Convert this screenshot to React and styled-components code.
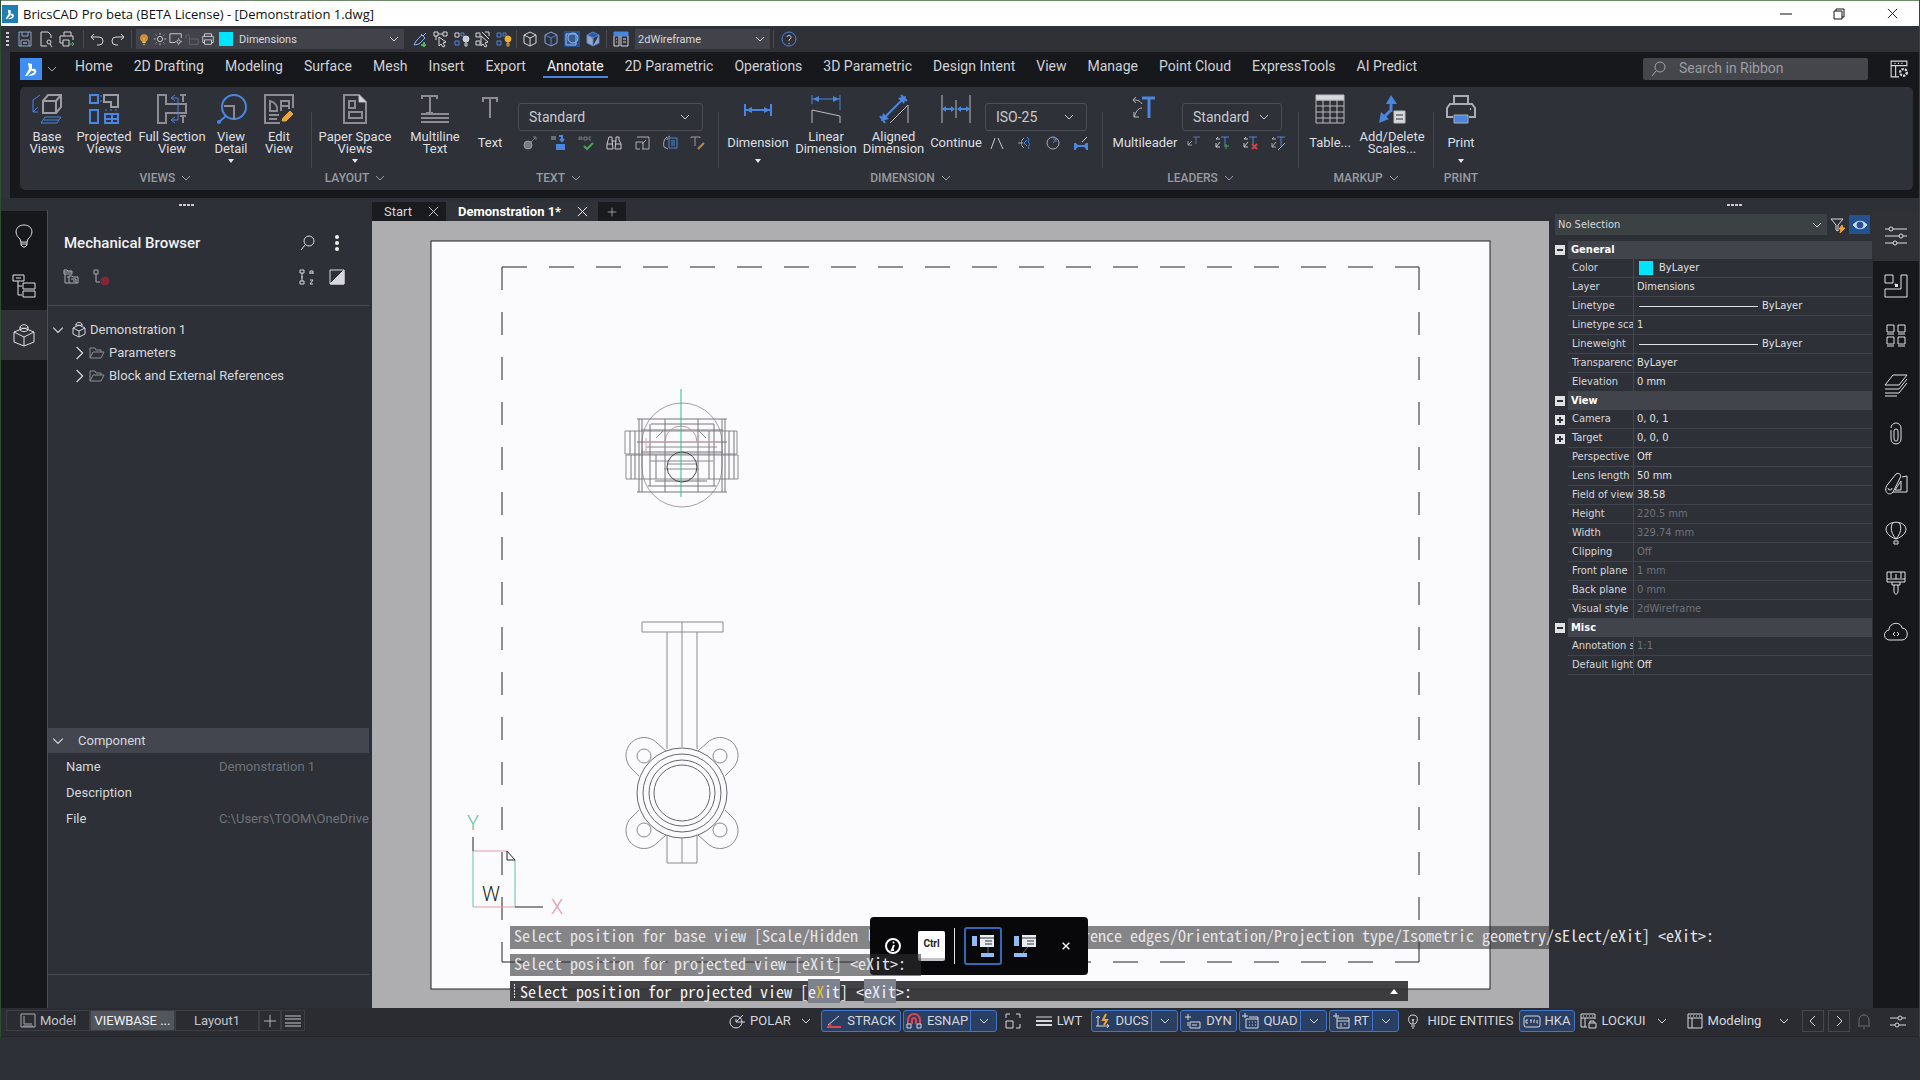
import React from "react";
import styled, { createGlobalStyle, css } from "styled-components";

const BLUE = "#4a86e0";
const ORANGE = "#e9a63a";

const GlobalStyle = createGlobalStyle`
  * {
    box-sizing: border-box;
  }
  body {
    margin: 0;
    background: #2d3037;
    color: #d6d8dd;
    font-family: Roboto, "Liberation Sans", sans-serif;
    font-size: 13px;
  }
  button, input, select {
    margin: 0;
    padding: 0;
    border: 0;
    background: none;
    color: inherit;
    font: inherit;
  }
`;

/* ---------- icons ---------- */

const Svg = styled.svg`
  flex: none;
  display: block;
  fill: none;
  stroke: currentColor;
  stroke-width: ${(p) => p.$stroke || 1};
  overflow: visible;
`;

const small = {
  save: <><path d="M2 1h12v14H2z M5 1v4h6V1 M4 15V9h8v6" stroke="#8fa6d0" /><path d="M6 12h4" /></>,
  preview: <><path d="M9 15H3V1h7l3 3v3" /><circle cx="11" cy="11" r="2" /><path d="M12 13l2 3" /></>,
  printMore: <><path d="M5 5V1h7v4 M4 12H1V5h13v4 M4 9h6v6H4z" /><path d="M9 13h6m-2-2l2 2-2 2" stroke="#52b15b" /></>,
  undo: <path d="M5 3L2 6l3 3 M2 6h8a4 4 0 0 1 0 8H8" />,
  redo: <path d="M11 3l3 3-3 3 M14 6H6a4 4 0 0 0 0 8h2" />,
  bulbOn: <><circle cx="8" cy="7" r="4" fill="#c8882c" stroke={ORANGE} /><path d="M6 12h4 M7 14h2 M8 6v4" stroke="#f1cd8b" /></>,
  sun: <><circle cx="8" cy="8" r="3" /><path d="M8 1v2 M8 13v2 M1 8h2 M13 8h2 M3 3l1 1 M12 12l1 1 M13 3l-1 1 M3 13l1-1" /></>,
  frameSun: <><path d="M7 12H1V2h13v5" /><circle cx="11" cy="11" r="2" /><path d="M11 7v1 M11 14v1 M7 11h1 M14 11h1" /></>,
  unlock: <path d="M5 8h10v6H5z M5 8V5a2 2 0 0 0-4 0v2" stroke="#666a70" />,
  printer: <path d="M4 5V2h8v3 M4 12H2V5h12v7h-2 M4 9h8v5H4z" />,
  dropper: <><path d="M2 14l2-4 6-6 3 3-6 6z M9 3l4 4 M11 5l3-3" stroke="#8fb2ea" /><path d="M12 11v5 M9 14h5" stroke="#52b15b" strokeWidth="2" /></>,
  pick: <path d="M1 1h4v4H1z M10 1h4v4h-4z M5 3h5 M6 6l7 5-3 1 2 3-2 1-2-3-2 2z M3 5v4" />,
  isolate: <><path d="M1 2h4v4H1z" /><path d="M1 10h4v4H1z M7 2h3v3H7z" stroke={BLUE} /><circle cx="12" cy="8" r="3" fill="#c9cbd0" /><path d="M11 12h2v3h-2z" /></>,
  unpick: <path d="M1 2h4v4H1z M10 1h4v4 M6 5l7 6-3 1 2 3-2 1-2-3-2 2z M1 10h4v4H1z M7 1l7 7" />,
  isolateOn: <><path d="M1 2h4v4H1z M1 10h4v4H1z M7 2h3v3H7z" stroke={BLUE} /><circle cx="12" cy="8" r="3" fill="#f0b02e" stroke="#f0b02e" /><path d="M11 12h2v3h-2z" stroke="#f0b02e" /></>,
  cube: <path d="M8 1l6 3v8l-6 3-6-3V4z M2 4l6 3 6-3 M8 7v8" />,
  cubeBlue: <><path d="M8 1l6 3v8l-6 3-6-3V4z" stroke="#86a8e0" /><path d="M2 4l6 3 6-3 M8 7v8" stroke={BLUE} /></>,
  shape: <><path d="M2 3h10v11H2z" fill="#355a94" stroke="#9fbbe8" /><circle cx="9" cy="7" r="5" stroke="#9fbbe8" /></>,
  cubeSolid: <><path d="M8 1l6 3-6 3-6-3z" fill="#355a94" stroke={BLUE} /><path d="M2 4l6 3v8l-6-3z M14 4v8l-6 3" fill="#9aa8c0" stroke={BLUE} /></>,
  explorer: <><path d="M1 1h14v4H1z" fill={BLUE} stroke={BLUE} /><path d="M1 5v10h5V5 M8 5v10h7V5 M3 8h1 M3 11h1 M10 8h3 M10 11h3" /></>,
  help: <><circle cx="8" cy="8" r="7" stroke={BLUE} /><path d="M6 6a2 2 0 1 1 3 2l-1 1v1 M8 12v1" /></>,
  textGrow: <><circle cx="6" cy="10" r="4" fill="#777b82" stroke="#9a9da3" /><path d="M9 7l5-5m-3 0h3v3" stroke="#777b82" /></>,
  textConvert: <><path d="M1 2h5 M1 4h5" stroke="#aaadb3" /><path d="M9 1h3v5m-2-2l2 2 2-2 M6 10h9 M6 12h9 M6 14h9" stroke={BLUE} strokeWidth="2" /></>,
  spell: <><path d="M1 5V2h3v3 M1 4h3 M6 2h3v3H6z M13 2h-2v3h2" stroke="#777b82" /><path d="M6 11l3 3 6-6" stroke="#45a653" strokeWidth="2" /></>,
  find: <path d="M3 2h3v3l1 9H1V9z M10 2h3v3l2 4v5H9l1-9z M6 6h4 M1 9h6 M9 9h6" />,
  tscale: <path d="M3 2h12v12H8 M2 7h7v7 M2 7v7h4 M12 5L8 9" stroke="#aaadb3" />,
  field: <><path d="M5 2C2 4 1 8 2 12l4 2 M8 1C6 2 5 3 5 5" stroke="#aaadb3" /><path d="M7 3h8v10H7z M9 6h4 M9 8h4 M9 10h4" stroke={BLUE} /></>,
  textEdit: <><path d="M1 2h9 M5 2v9 M1 2v1 M10 2v1" stroke="#9a9da3" /><path d="M8 14l6-6" stroke="#c9853c" strokeWidth="2" /></>,
  angular: <path d="M2 14L6 3 M9 3l5 11" strokeDasharray="12 1" />,
  arcDim: <><path d="M7 3a6 6 0 0 0 0 10 M1 8h5" stroke="#9a9da3" /><path d="M10 2c4 3 0 4 2 6s-2 3 0 6 M7 8l3-3 M7 8l3 3" stroke={BLUE} /></>,
  radial: <><circle cx="8" cy="8" r="6" stroke="#aaadb3" /><path d="M8 8l3-4m-3 0h3v3" stroke={BLUE} /></>,
  dimEdit: <><path d="M2 8v7 M14 8v7 M2 11h12 M4 9l-2 2 2 2 M12 9l2 2-2 2" stroke={BLUE} strokeWidth="2" /><path d="M9 7l5-5" /></>,
  leadPlain: <><path d="M7 2h7 M10 2v7" stroke="#5677ac" /><path d="M6 6L2 10V6 M2 10h4" stroke="#9a9da3" /></>,
  leadAdd: <><path d="M7 2h8 M11 2v8" stroke={BLUE} /><path d="M6 4H2l2-2 M6 7l-4 5V8 M2 12h4" /><path d="M10 11h5 M12 9v5" stroke="#45a653" /></>,
  leadDel: <><path d="M7 2h8 M11 2v7" stroke={BLUE} /><path d="M6 4H2l2-2 M6 7l-4 5V8 M2 12h4" /><path d="M10 9l5 5 M15 9l-5 5" stroke="#df3c46" strokeWidth="2" /></>,
  leadAlign: <><path d="M7 2h8 M11 2v9" stroke={BLUE} /><path d="M6 4H2l2-2 M6 7l-4 5V8 M2 12h4 M8 15l7-7" stroke="#aaadb3" /></>,
  search: <><circle cx="10" cy="6" r="5" /><path d="M6 10l-4 5" /></>,
  kebab: <g fill="#f0f1f3" stroke="none"><circle cx="8" cy="2" r="2" /><circle cx="8" cy="8" r="2" /><circle cx="8" cy="14" r="2" /></g>,
  filesTree: <path d="M1 1h3l1 1h4v3H1z M2 5v9h4 M6 7h3l1 1h5v6H6z M1 3h8 M4 8h2 M8 10h5v4 M10 12h2" stroke="#aaadb3" />,
  treeOff: <><path d="M1 1h4v4H1z M3 5v8h4" stroke="#aaadb3" /><circle cx="12" cy="12" r="4" fill="#822737" stroke="#822737" /></>,
  sortAz: <><path d="M1 1h4v3H1z M1 12h4v3H1z M3 4v8 M2 8h2" /><path d="M11 5V2h3v3 M11 4h3 M11 11h3l-3 4h3" /></>,
  contrast: <><path d="M1 1h14v14H1z" /><path d="M15 1v14H1z" fill="#d6d8dd" /></>,
  part: <path d="M8 3l6 3v6l-6 3-6-3V6z M2 6l6 3 6-3 M8 9v6 M5 4V2c1-2 5-2 6 0v2 M5 2c1 2 5 2 6 0" />,
  folder: <path d="M1 13V3h5l1 2h5v2 M1 13l3-6h11l-3 6z" stroke="#8b8e94" />,
  model: <path d="M1 1h14v13H1z M4 3v8h8 M3 13h10" stroke="#aaadb3" />,
  plus: <path d="M8 1v14 M1 8h14" />,
  lines: <path d="M0 3h16 M0 6h16 M0 10h16 M0 13h16" />,
  polar: <><circle cx="7" cy="9" r="6" /><path d="M7 9l7-7 M7 9h9 M7 9V6" /></>,
  strack: <><path d="M2 12l11-9" /><path d="M1 14h14 M2 14l3-3" stroke="#dc4550" strokeWidth="2" /></>,
  magnet: <><path d="M2 11V7a6 6 0 0 1 12 0v4 M6 11V7a2 2 0 0 1 4 0v4" stroke="#dc4550" strokeWidth="2" /><path d="M1 11h4v4H1z M11 11h4v4h-4z" /></>,
  corners: <path d="M1 5V1h4 M11 1h4v4 M15 11v4h-4 M1 8h7v7H1z" />,
  lwt: <><path d="M0 4h16" /><path d="M0 8h16 M0 12h16" strokeWidth="2" /></>,
  ducs: <><path d="M4 13V3 M2 5l2-2 2 2 M2 13h13 M13 11l2 2-2 2" /><path d="M12 1L9 7h4l-3 5" stroke={ORANGE} strokeWidth="2" /></>,
  dyn: <path d="M3 1v6 M0 4h6 M5 9h10v6H5z M7 12h5 M3 9v4" />,
  quad: <path d="M3 0v5 M0 3h6 M4 6h12v9H4z M7 4h9v2 M7 9h1 M10 9h1 M13 9h1 M7 12h1 M10 12h1 M13 12h1" />,
  rt: <path d="M3 0v5 M0 3h6 M4 5h12v10H4z M4 8h12 M7 11h2 M11 11h2 M7 13h2" />,
  bulb: <path d="M6 11C3 9 2 2 8 2s5 7 2 9z M6 13h4 M7 15h2 M7 6l1 2 1-2 M8 8v3" />,
  ctrl: <><rect x="0" y="3" width="16" height="11" rx="2" /><path d="M4 7H2v3h2 M6 7h2 M7 7v3 M10 10V7h1 M13 7v3h1" /></>,
  lockui: <path d="M7 14H1V1h14v5 M1 5h14 M5 5v9 M3 3h1 M6 3h1 M9 3h1 M12 3h1 M9 10h7v5H9z M10 10V8h4v2" />,
  workspace: <path d="M1 1h14v14H1z M1 5h14 M5 5v10 M3 3h1 M6 3h1 M9 3h1 M12 3h1" />,
  bell: <path d="M3 12V7a5 5 0 0 1 10 0v5l1 1H2z M7 15h2 M8 1v1" stroke="#666a70" />,
  sliders: <><path d="M0 5h8 M12 5h4 M0 12h5 M9 12h7" /><circle cx="10" cy="5" r="2" /><circle cx="7" cy="12" r="2" /></>,
  filter: <><path d="M1 2h12L8 8v6l-2-1V8z" /><path d="M12 8l-3 4h2l-1 4 5-5h-2z" fill={ORANGE} stroke={ORANGE} /></>,
  eye: <><path d="M1 8c4-5 10-5 14 0c-4 5-10 5-14 0z" fill="#c3dcff" stroke="#c3dcff" /><circle cx="8" cy="8" r="3" fill="#2a4f8c" stroke="#2a4f8c" /></>,
  ribbonSetup: <><path d="M1 1h14v4H1z M1 5v10h7 M5 5v10 M4 3h1 M7 3h1 M10 3h1" /><circle cx="12" cy="11" r="3" strokeWidth="2" strokeDasharray="2 1" /></>,
  info: <><circle cx="8" cy="8" r="7" strokeWidth="2" /><path d="M9 4l-1 1 M9 7l-2 5h2" strokeWidth="2" /></>,
};

const rail = {
  bulb: <path d="M8 15C1 9 4 1 12 1s11 8 4 14l-1 3H9z M9 18v3l2 2h2l2-2v-3 M9 20h6" />,
  structure: <path d="M1 1h11v6H1z M4 4h5 M6 7v14h4 M6 12h4 M11 9h12v6H11z M11 17h12v6H11z" />,
  part: <path d="M12 5l10 4v10l-10 4-10-4V9z M2 9l10 5 10-5 M12 14v9 M8 7V4c1-3 7-3 8 0v3c-1 2-7 2-8 0 M8 4c1 2 7 2 8 0" />,
  props: <><path d="M1 5h4 M9 5h14 M1 12h14 M19 12h4 M1 19h8 M13 19h10" /><circle cx="7" cy="5" r="2" /><circle cx="17" cy="12" r="2" /><circle cx="11" cy="19" r="2" /></>,
  blocks: <><path d="M1 1h8v8H1z M17 1h6v22H1v-8h16z" /><path d="M11 10l2 2m-2 0h2v-2" strokeWidth="2" /></>,
  tiles: <path d="M3 2h7v7H3z M14 2h7v7h-7z M3 11h7 M14 11h7 M3 14h7v7H3z M14 14h7v7h-7z M3 23h7 M14 23h7" />,
  layers: <path d="M9 2h14l-8 10H1z M1 16h14l8-10 M1 20h14l8-10 M1 23h12" />,
  clip: <path d="M7 8v9a5 5 0 0 0 10 0V6a5 5 0 0 0-10 0 M10 17V9a2 2 0 0 1 4 0v8a2 2 0 0 1-4 0" />,
  materials: <path d="M4 12L12 2c3-2 6 1 4 4l-7 14c-4 5-11-1-5-8z M9 20h14V4l-5 1 M17 9v9h-6z M4 16a2 2 0 1 0 4 0" />,
  balloon: <path d="M12 18C6 16 2 12 2 8C3-1 21-1 22 8c0 4-4 8-10 10z M12 18C5 10 7 3 10 1 M12 18c7-8 5-15 2-17 M10 20h4v3h-4z" />,
  brush: <path d="M3 1h18v10H3z M7 1v6 M12 3v5 M17 1v6 M3 8h18 M8 11v3h8v-3 M10 14v7c1 3 3 3 4 0v-7" />,
  cloud: <path d="M6 20a5 5 0 0 1-1-10c0-8 12-9 13-2c7 0 7 12 0 12z M11 16l-2-2 2-2 M13 12l2 2-2 2" />,
};

const large = {
  base: <><path d="M11 7h13v12H11z M11 7l5-6h13v12l-5 6 M24 7l5-6" strokeWidth="2" stroke="#9b9da2" /><path d="M8 1L1 6v12h5 M1 18l5-5 M13 23h16l-4 6H9z M12 26h15" stroke={BLUE} /></>,
  projected: <><path d="M15 1h14v12h-7V8h-7z" strokeWidth="2" stroke="#9b9da2" /><path d="M1 1h8v8H1z M1 16h8v13H1z M16 20h13v9H16z M23 20v9 M16 25h13" stroke={BLUE} strokeWidth="2" /><path d="M12 1v8 M16 16h13" stroke={BLUE} strokeDasharray="2 3" /></>,
  section: <><path d="M1 1h8v9h20v9H9v10H1z" strokeWidth="2" stroke="#8b8d92" /><path d="M21 4v22 M21 4h-6 M21 26h-6 M18 1l-4 3 4 3 M18 23l-4 3 4 3" stroke={BLUE} /><path d="M23 1h6 M26 1v7 M23 22h6 M26 22v7" stroke="#8b8d92" strokeWidth="2" /></>,
  detail: <><circle cx="18" cy="13" r="12" stroke={BLUE} strokeWidth="2" /><path d="M10 22l-7 6" stroke={BLUE} strokeWidth="2" /><circle cx="3" cy="28" r="2" fill={BLUE} stroke="none" /><path d="M8 12h10v13" strokeWidth="2" stroke="#8b8d92" /></>,
  edit: <><path d="M29 14V1H1v28h15 M6 7v10h7c1-5-2-9-7-10z M17 17V7h8v8 M17 12h8 M5 21h10 M5 25h8" strokeWidth="2" stroke="#8b8d92" /><path d="M18 27l1-3 7-7 3 3-7 7z" fill={ORANGE} stroke={ORANGE} /></>,
  paper: <><path d="M4 1h15l7 7v21H4z M9 7h6v7H9z M9 18h13v6H9z" strokeWidth="2" stroke="#8b8d92" /><path d="M19 1v7h7z" fill="#d6d8dd" /></>,
  mtext: <path d="M2 5V2h15v3 M10 2v17 M6 19h7 M1 20h28 M1 24h28 M1 28h28" strokeWidth="2" stroke="#8b8d92" />,
  text: <path d="M8 8V4h14v4 M15 4v20" strokeWidth="2" stroke="#8b8d92" />,
  dimension: <><path d="M2 10v12 M28 10v12 M2 16h26" stroke={BLUE} strokeWidth="2" /><path d="M3 16l6-3v6z M27 16l-6-3v6z" fill={BLUE} stroke="none" /></>,
  linear: <><path d="M1 29V16l28 6v7" /><path d="M1 1v9 M29 1v15 M1 5h28" stroke={BLUE} /><path d="M2 5l6-3v6z M28 5l-6-3v6z" fill={BLUE} stroke="none" /></>,
  aligned: <><path d="M11 29l18-18v18" /><path d="M3 26L26 3 M1 22l5 7 M22 1l6 6" stroke={BLUE} strokeWidth="2" /><path d="M2 27l2-8 6 6z M27 2l-8 2 6 6z" fill={BLUE} stroke="none" /></>,
  cont: <><path d="M1 1v28 M15 6v18 M29 1v28" /><path d="M2 15h11 M17 15h11" stroke={BLUE} strokeWidth="2" /><path d="M1 15l4-3v6z M14 15l-4-3v6z M16 15l4-3v6z M29 15l-4-3v6z" fill={BLUE} stroke="none" /></>,
  mleader: <><path d="M12 4h13 M19 4v20" stroke={BLUE} strokeWidth="3" /><path d="M12 10c-2-4-6-4-9-4 M6 3L3 6l3 3 M12 14c-4 0-6 4-8 9 M4 18v5h5" /></>,
  table: <><path d="M1 6h28v23H1z M1 12h28 M1 18h28 M1 24h28 M8 6v23 M15 6v23 M22 6v23" /><path d="M1 1h28v5H1z" fill="#d6d8dd" /></>,
  scales: <><path d="M14 5v13 M13 17l-8 8" stroke={BLUE} strokeWidth="3" /><path d="M14 1l6 9H9z M2 29l2-11 8 7z" fill={BLUE} stroke="none" /><path d="M17 17h11v12H17z" fill="#d6d8dd" /><path d="M19 21h7 M19 25h7" stroke="#2e3137" /></>,
  print: <><path d="M8 10V2h14v8 M7 23H1V14l3-4h22l3 4v9h-6 M24 15h1" strokeWidth="2" stroke="#aaadb3" /><path d="M8 21h14v8H8z" fill={BLUE} stroke="#aaadb3" /></>,
};

const SmallIcon = ({ name, size = 16 }) => (
  <Svg width={size} height={size} viewBox="0 0 16 16" aria-hidden="true">{small[name]}</Svg>
);

const Chevron = ({ open = true, size = 10 }) => (
  <Svg width={size} height={size} viewBox="0 0 10 10" aria-hidden="true">
    <path d={open ? "M1 3l4 4 4-4" : "M3 0l5 5-5 5"} />
  </Svg>
);

const BricsLogo = ({ size }) => (
  <Svg width={size} height={size} viewBox="0 0 22 22" aria-hidden="true">
    <path d="M8 5l4 1v6l-5 6H5l4-7z" fill="#fff" stroke="none" />
    <path d="M12 11c4-1 5 2 4 4s-4 3-8 3l5-3c2-1 1-2-1-2z" fill="#fff" stroke="none" />
  </Svg>
);

/* ---------- title bar and quick access bar ---------- */

const Window = styled.div`
  display: flex;
  flex-direction: column;
  min-height: 100vh;
`;

const Frame = styled.div`
  flex: 1;
  display: flex;
  flex-direction: column;
  border-left: 1px solid #2c4f30;
  border-right: 1px solid #2c4f30;
`;

const TitleBar = styled.header`
  display: flex;
  align-items: center;
  height: 26px;
  padding: 0 15px 0 1px;
  gap: 5px;
  border-top: 1px solid #6f8a6b;
  background: #fff;
  color: #111;
`;

const AppBadge = styled.span`
  display: flex;
  align-items: center;
  width: 16px;
  height: 18px;
  background: #1f7fb4;
`;

const WindowTitle = styled.h1`
  flex: 1;
  margin: 0;
  font: 13px "Open Sans", "Noto Sans", sans-serif;
`;

const WindowButton = styled.button`
  display: flex;
  justify-content: center;
  width: 48px;
  &:last-child {
    width: 24px;
    margin-left: 12px;
  }
`;

const QuickBar = styled.div`
  display: flex;
  align-items: center;
  height: 26px;
  padding-left: 5px;
  background: #303137;
  font-size: 11px;
`;

const Grip = styled.span`
  width: 3px;
  height: 14px;
  background: repeating-linear-gradient(#c9cbd0 0 2px, transparent 2px 4px);
`;

const HGrip = styled.div`
  width: 15px;
  height: 2px;
  margin: 6px auto 0;
  background: repeating-linear-gradient(90deg, #c9cbd0 0 3px, transparent 3px 4px);
`;

const IconRow = styled.div`
  display: flex;
  align-items: center;
  gap: ${(p) => p.$gap || 4}px;
  padding: 0 ${(p) => p.$pad || 0}px;
`;

const IconButton = styled.button`
  display: flex;
  align-items: center;
  justify-content: center;
  background: ${(p) => (p.$on ? "#24528f" : "none")};
`;

const VLine = styled.span`
  width: 1px;
  height: 18px;
  background: #4a4c52;
`;

const SelectBox = styled.div`
  position: relative;
  display: flex;
  align-items: center;
  width: ${(p) => p.$width};
  height: ${(p) => p.$height || 20}px;
  background: ${(p) => p.$bg || "#42434a"};
  ${(p) => p.$outlined && css`
    border: 1px solid #4b4e54;
    border-radius: 3px;
    background: none;
  `}
  select {
    flex: 1;
    min-width: 0;
    height: 100%;
    padding: 0 20px 0 ${(p) => p.$indent || 3}px;
    appearance: none;
    outline: none;
  }
  option {
    background: #2e3137;
  }
  > svg:last-child {
    position: absolute;
    right: ${(p) => (p.$outlined ? 12 : 5)}px;
    pointer-events: none;
  }
`;

const LayerFlags = styled.div`
  display: flex;
  gap: 2px;
  padding: 0 4px 0 1px;
`;

const Swatch = styled.span`
  width: 14px;
  height: 14px;
  background: #00e5ff;
`;

function Select({ label, options, before, ...rest }) {
  return (
    <SelectBox {...rest}>
      {before}
      <select aria-label={label}>
        {options.map((o) => <option key={o}>{o}</option>)}
      </select>
      <Chevron />
    </SelectBox>
  );
}

const Icons = ({ names, gap, pad, on }) => (
  <IconRow $gap={gap} $pad={pad}>
    {names.map((n) => (
      <IconButton key={n} aria-label={n} $on={n === on}><SmallIcon name={n} /></IconButton>
    ))}
  </IconRow>
);

/* ---------- ribbon ---------- */

const RibbonArea = styled.section`
  display: flex;
  background: #17181b;
`;

const RibbonEdge = styled.div`
  width: 9px;
  padding: 66px 0 0 2px;
  background: #2f3238;
`;

const RibbonMain = styled.div`
  flex: 1;
  padding: 0 6px 8px 10px;
`;

const TabRow = styled.nav`
  display: flex;
  align-items: center;
  height: 35px;
  padding: 0 5px 1px 0;
`;

const MenuButton = styled.button`
  display: flex;
  align-items: center;
  gap: 5px;
  margin-right: 14px;
  color: #a2a5ab;
  > span {
    width: 22px;
    height: 22px;
    background: #3f8cf3;
  }
`;

const Tab = styled.button`
  align-self: flex-start;
  height: 26px;
  margin-right: 13px;
  padding: 3px 4px 0;
  border-bottom: 2px solid ${(p) => (p.$active ? BLUE : "transparent")};
  color: ${(p) => (p.$active ? "#f3f4f6" : "#d0d2d6")};
  font-size: 14px;
`;

const Search = styled.label`
  display: flex;
  align-items: center;
  gap: 13px;
  width: 225px;
  height: 22px;
  margin: 0 22px 0 auto;
  padding-left: 7px;
  border-radius: 2px;
  background: #45464b;
  color: #a2a5ab;
  input {
    width: 160px;
    padding-bottom: 2px;
    outline: none;
    font-size: 14px;
  }
  input::placeholder {
    color: #9a9ca2;
    opacity: 1;
  }
`;

const Panel = styled.div`
  display: flex;
  height: 103px;
  border-radius: 5px;
  background: #2e3137;
`;

const Group = styled.section`
  display: flex;
  flex-direction: column;
  padding-bottom: 4px;
`;

const GroupBody = styled.div`
  flex: 1;
  display: flex;
  padding: 0 ${(p) => p.$right}px 0 ${(p) => p.$left}px;
`;

const GroupTitle = styled.button`
  display: flex;
  align-items: center;
  align-self: center;
  gap: 6px;
  height: 16px;
  color: #989ba2;
  font-size: 12px;
  font-weight: 500;
`;

const GroupLine = styled.span`
  width: 1px;
  margin: 25px 0 22px;
  background: ${(p) => (p.$hidden ? "transparent" : "#43464c")};
`;

const Tool = styled.button`
  display: flex;
  flex-direction: column;
  align-items: center;
  width: ${(p) => p.$width}px;
  padding-top: 7px;
  color: #b9bbc0;
  line-height: 12px;
`;

const ToolLabel = styled.span`
  display: flex;
  align-items: center;
  height: 24px;
  margin: 7px 0 4px;
  color: #dddfe3;
  white-space: pre;
`;

const Arrow = styled.span`
  border: 3px solid transparent;
  border-top: 4px solid #e6e7ea;
  border-bottom: 0;
`;

const StyleColumn = styled.div`
  display: flex;
  flex-direction: column;
  gap: 4px;
  width: ${(p) => p.$width}px;
  margin-left: ${(p) => p.$left || 0}px;
  padding-top: 16px;
  color: #c9cbd0;
  font-size: 14px;
`;

const ribbonTabs = [
  "Home", "2D Drafting", "Modeling", "Surface", "Mesh", "Insert", "Export", "Annotate",
  "2D Parametric", "Operations", "3D Parametric", "Design Intent", "View", "Manage",
  "Point Cloud", "ExpressTools", "AI Predict",
];

const groups = [
  { title: "VIEWS", left: 4, right: 9, tools: [
    ["base", "Base\nViews", 46], ["projected", "Projected\nViews", 68],
    ["section", "Full Section\nView", 68], ["detail", "View\nDetail", 50, true], ["edit", "Edit\nView", 46],
  ] },
  { title: "LAYOUT", left: 0, right: 0, noLine: true, tools: [["paper", "Paper Space\nViews", 86, true]] },
  { title: "TEXT", left: 0, right: 15, tools: [["mtext", "Multiline\nText", 72], ["text", "Text", 38]],
    style: { value: "Standard", width: 185, left: 9, icons: ["textGrow", "textConvert", "spell", "find", "tscale", "field", "textEdit"] } },
  { title: "DIMENSION", left: 5, right: 15, tools: [
    ["dimension", "Dimension", 68, true], ["linear", "Linear\nDimension", 68],
    ["aligned", "Aligned\nDimension", 67], ["cont", "Continue", 58],
  ], style: { value: "ISO-25", width: 102, icons: ["angular", "arcDim", "radial", "dimEdit"] } },
  { title: "LEADERS", left: 5, right: 16, tools: [["mleader", "Multileader", 74]],
    style: { value: "Standard", width: 100, icons: ["leadPlain", "leadAdd", "leadDel", "leadAlign"] } },
  { title: "MARKUP", left: 4, right: 6, tools: [["table", "Table...", 54], ["scales", "Add/Delete\nScales...", 70]] },
  { title: "PRINT", left: 0, right: 0, noLine: true, plain: true, tools: [["print", "Print", 54, true]] },
];

function RibbonGroup({ group }) {
  const { style } = group;
  return (
    <>
      <Group>
        <GroupBody $left={group.left} $right={group.right}>
          {group.tools.map(([icon, label, width, more]) => (
            <Tool key={label} $width={width}>
              <Svg width="30" height="30" viewBox="0 0 30 30" aria-hidden="true">{large[icon]}</Svg>
              <ToolLabel>{label}</ToolLabel>
              {more && <Arrow />}
            </Tool>
          ))}
          {style && (
            <StyleColumn $width={style.width} $left={style.left}>
              <Select label={group.title} options={[style.value]} $width="100%" $height={28} $indent={10} $outlined />
              <Icons names={style.icons} gap={12} pad={4} />
            </StyleColumn>
          )}
        </GroupBody>
        <GroupTitle>{group.title}{!group.plain && <Chevron />}</GroupTitle>
      </Group>
      <GroupLine $hidden={group.noLine} />
    </>
  );
}

/* ---------- side rails and panels ---------- */

const Workspace = styled.main`
  flex: 1;
  display: flex;
`;

const Dock = styled.div`
  display: flex;
  flex-direction: column;
  width: ${(p) => p.$width}px;
`;

const DockRow = styled.div`
  flex: 1;
  display: flex;
`;

const Rail = styled.nav`
  width: 46px;
  margin-top: 5px;
  background: #17181b;
`;

const RailButton = styled.button`
  display: flex;
  align-items: center;
  justify-content: center;
  width: 100%;
  height: ${(p) => (p.$tall ? 50 : 49)}px;
  padding-right: 1px;
  background: ${(p) => (p.$active ? "#2f3137" : "none")};
  color: #e0e1e5;
`;

const Browser = styled.aside`
  flex: 1;
  min-width: 0;
  display: flex;
  flex-direction: column;
  margin: 4px 3px 0 0;
  border-left: 1px solid #4b4e54;
`;

const BrowserHead = styled.div`
  display: flex;
  align-items: center;
  justify-content: space-between;
  height: 53px;
  margin-top: 6px;
  padding: 0 23px 0 16px;
  h2 {
    margin: 0;
    color: #f1f2f4;
    font-size: 15px;
    font-weight: 500;
  }
`;

const BrowserTools = styled.div`
  display: flex;
  justify-content: space-between;
  height: 36px;
  padding: 0 23px 20px 15px;
`;

const Tree = styled.ul`
  flex: 1;
  margin: 0;
  padding: 12px 0 0;
  border-top: 1px solid #484b51;
  list-style: none;
`;

const TreeRow = styled.li`
  display: flex;
  align-items: center;
  gap: ${(p) => (p.$child ? 4 : 3)}px;
  height: 23px;
  padding-left: ${(p) => (p.$child ? 25 : 4)}px;
  > button {
    display: flex;
    width: ${(p) => (p.$child ? 12 : 16)}px;
  }
`;

const SectionHead = styled.button`
  display: flex;
  align-items: center;
  gap: 14px;
  height: 25px;
  padding-left: 4px;
  background: #43464e;
`;

const Details = styled.dl`
  display: grid;
  grid-template-columns: 153px 1fr;
  grid-auto-rows: 26px;
  align-content: start;
  align-items: center;
  height: 222px;
  margin: 0 0 33px;
  padding-left: 18px;
  border-bottom: 1px solid #484b51;
  dd {
    margin: 0;
    overflow: hidden;
    color: #6f737a;
    white-space: nowrap;
  }
`;

const Properties = styled.aside`
  flex: 1;
  min-width: 0;
  padding: 0 1px 0 6px;
  font-family: "DejaVu Sans Condensed", "DejaVu Sans", sans-serif;
  font-size: 11px;
`;

const FilterRow = styled.div`
  display: flex;
  align-items: center;
  gap: 3px;
  margin: 8px 2px 6px 0;
`;

const EyeButton = styled(IconButton)`
  width: 21px;
  height: 19px;
`;

const PropTable = styled.table`
  width: 100%;
  table-layout: fixed;
  border-collapse: separate;
  border-spacing: 0;
  line-height: 18px;
  th, td {
    overflow: hidden;
    padding: 0;
    font-weight: normal;
    text-align: left;
    white-space: nowrap;
  }
`;

const PropRow = styled.tr`
  th {
    padding-left: 4px;
    border-right: 1px solid #45484e;
    border-bottom: 1px solid #404349;
  }
  td:last-child {
    padding-left: 3px;
    border-bottom: 1px solid #404349;
    color: ${(p) => (p.$muted ? "#70737a" : "#e0e1e5")};
  }
`;

const PropHead = styled.tr`
  th {
    padding-left: 3px;
    background: #42444c;
    color: #fff;
    font-weight: bold;
  }
`;

const Fold = styled.button`
  display: block;
  width: 10px;
  height: 10px;
  background: ${(p) => (p.$plus
    ? "linear-gradient(#2e3137, #2e3137) center / 6px 2px no-repeat, linear-gradient(#2e3137, #2e3137) center / 2px 6px no-repeat, #e0e1e5"
    : "linear-gradient(#2e3137, #2e3137) center / 6px 2px no-repeat, #e0e1e5")};
`;

const Inline = styled.span`
  display: flex;
  align-items: center;
  gap: ${(p) => p.$gap}px;
  padding-left: 2px;
`;

const Sample = styled.span`
  width: 119px;
  height: 1px;
  background: #e0e1e5;
`;

const properties = [
  { title: "General", rows: [
    ["Color", <Inline $gap={6}><Swatch />ByLayer</Inline>],
    ["Layer", "Dimensions"],
    ["Linetype", <Inline $gap={4}><Sample />ByLayer</Inline>],
    ["Linetype scale", "1"],
    ["Lineweight", <Inline $gap={4}><Sample />ByLayer</Inline>],
    ["Transparency", "ByLayer"],
    ["Elevation", "0 mm"],
  ] },
  { title: "View", rows: [
    ["Camera", "0, 0, 1", "plus"], ["Target", "0, 0, 0", "plus"], ["Perspective", "Off"],
    ["Lens length", "50 mm"], ["Field of view", "38.58"], ["Height", "220.5 mm", "muted"],
    ["Width", "329.74 mm", "muted"], ["Clipping", "Off", "muted"], ["Front plane", "1 mm", "muted"],
    ["Back plane", "0 mm", "muted"], ["Visual style", "2dWireframe", "muted"],
  ] },
  { title: "Misc", rows: [["Annotation scale", "1:1", "muted"], ["Default lighting", "Off"]] },
];

function SideRail({ names, active }) {
  return (
    <Rail>
      {names.map((n, i) => (
        <RailButton key={n} aria-label={n} $active={n === active} $tall={i % 2 === 0}>
          <Svg width="24" height="24" viewBox="0 0 24 24" aria-hidden="true">{rail[n]}</Svg>
        </RailButton>
      ))}
    </Rail>
  );
}

function MechanicalBrowser() {
  return (
    <Browser>
      <BrowserHead>
        <h2>Mechanical Browser</h2>
        <Icons names={["search", "kebab"]} gap={14} pad={1} />
      </BrowserHead>
      <BrowserTools>
        <Icons names={["filesTree", "treeOff"]} gap={14} />
        <Icons names={["sortAz", "contrast"]} gap={14} pad={1} />
      </BrowserTools>
      <Tree>
        <TreeRow>
          <button aria-label="Collapse"><Chevron size={12} /></button>
          <SmallIcon name="part" />
          Demonstration 1
        </TreeRow>
        {["Parameters", "Block and External References"].map((t) => (
          <TreeRow key={t} $child>
            <button aria-label="Expand"><Chevron open={false} size={12} /></button>
            <SmallIcon name="folder" />
            {t}
          </TreeRow>
        ))}
      </Tree>
      <SectionHead><Chevron size={12} />Component</SectionHead>
      <Details>
        <dt>Name</dt><dd>Demonstration 1</dd>
        <dt>Description</dt><dd />
        <dt>File</dt><dd>C:\Users\TOOM\OneDrive</dd>
      </Details>
    </Browser>
  );
}

function PropertiesPanel() {
  return (
    <Properties>
      <FilterRow>
        <Select label="Selection" options={["No Selection"]} $width="273px" $height={21} $bg="#3c4143" />
        <IconButton aria-label="Filter"><SmallIcon name="filter" /></IconButton>
        <EyeButton aria-label="Preview" $on><SmallIcon name="eye" /></EyeButton>
      </FilterRow>
      <PropTable>
        <colgroup><col width="13" /><col width="66" /><col /></colgroup>
        <tbody>
          {properties.map((section) => (
            <React.Fragment key={section.title}>
              <PropHead>
                <td><Fold aria-label={"Collapse " + section.title} /></td>
                <th colSpan="2">{section.title}</th>
              </PropHead>
              {section.rows.map(([name, value, kind]) => (
                <PropRow key={name} $muted={kind === "muted"}>
                  <td>{kind === "plus" && <Fold $plus aria-label={"Expand " + name} />}</td>
                  <th scope="row">{name}</th>
                  <td>{value}</td>
                </PropRow>
              ))}
            </React.Fragment>
          ))}
        </tbody>
      </PropTable>
    </Properties>
  );
}

/* ---------- drawing area ---------- */

const DrawingArea = styled.section`
  flex: 1;
  min-width: 0;
  display: flex;
  flex-direction: column;
  padding-top: 4px;
`;

const DocTabs = styled.div`
  display: flex;
  height: 19px;
`;

const DocTab = styled.div`
  display: flex;
  align-items: center;
  gap: 16px;
  padding: 0 ${(p) => (p.$active ? 10 : 7)}px 0 12px;
  background: ${(p) => (p.$active ? "#2f3238" : "#1a1b1e")};
  color: ${(p) => (p.$active ? "#fff" : "#d6d8dd")};
  font-weight: ${(p) => (p.$active ? "bold" : "normal")};
`;

const NewTab = styled.button`
  display: flex;
  align-items: center;
  justify-content: center;
  width: 28px;
  background: #1a1b1e;
`;

const Canvas = styled.div`
  position: relative;
  flex: 1;
  background: #aeaeb0;
`;

const Sheet = styled.svg`
  position: absolute;
  inset: 0;
  width: 100%;
  height: 100%;
  fill: none;
  stroke: #8a8a8e;
  text {
    font-family: Roboto, sans-serif;
    font-size: 20px;
    font-weight: 300;
    stroke: none;
  }
`;

const CommandLine = styled.div`
  position: absolute;
  z-index: 2;
  left: 138px;
  right: 141px;
  bottom: 7px;
  display: flex;
  flex-direction: column;
  align-items: flex-start;
  gap: 5px;
  color: #f3f3f5;
  font-family: "Noto Sans Mono CJK SC", "DejaVu Sans Mono", monospace;
  font-size: 16px;
  white-space: pre;
`;

const History = styled.div`
  position: relative;
  z-index: ${(p) => (p.$front ? 2 : 0)};
  height: ${(p) => (p.$front ? 22 : 23)}px;
  padding: 0 ${(p) => (p.$front ? 15 : 4)}px 0 4px;
  background: rgba(48, 49, 52, 0.58);
  color: #e5e5e8;
  line-height: 18px;
`;

const Prompt = styled.div`
  align-self: stretch;
  display: flex;
  align-items: center;
  height: 20px;
  padding: 0 10px 0 4px;
  background: rgba(50, 50, 53, 0.92);
  line-height: 20px;
  mark {
    background: #7d828d;
    color: #eef;
  }
  b {
    color: #e6c02c;
    font-weight: normal;
  }
`;

const PromptGrip = styled.span`
  width: 1px;
  height: 14px;
  margin-right: 5px;
  background: repeating-linear-gradient(#e0e1e5 0 2px, transparent 2px 3px);
`;

const Expand = styled.button`
  margin-left: auto;
  border: 4px solid transparent;
  border-top: 0;
  border-bottom: 5px solid #fff;
`;

const Assistant = styled.div`
  position: absolute;
  z-index: 1;
  left: 360px;
  bottom: 26px;
  display: flex;
  align-items: center;
  width: 218px;
  height: 58px;
  padding: 0 18px 0 15px;
  border-radius: 4px;
  background: #08080a;
  color: #fff;
  font-family: Roboto, sans-serif;
  > button:last-child {
    margin-left: auto;
  }
`;

const Key = styled.kbd`
  width: 27px;
  height: 30px;
  margin: 0 9px 0 17px;
  border-radius: 2px;
  border-bottom: 3px solid #c4c4c8;
  background: #fff;
  color: #222;
  font: bold 10px/26px Roboto, sans-serif;
  text-align: center;
`;

const AssistantLine = styled.span`
  width: 1px;
  height: 36px;
  margin-right: 9px;
  background: #e0e1e5;
`;

const Choice = styled.button`
  display: flex;
  align-items: center;
  justify-content: center;
  width: 38px;
  height: 38px;
  margin-right: 4px;
  border: 2px solid ${(p) => (p.$active ? "#3369b4" : "transparent")};
  border-radius: 3px;
`;

const ProjectionIcon = ({ angled }) => (
  <Svg width="22" height="22" viewBox="0 0 22 22" aria-hidden="true">
    <path d="M0 1h5v10H0z" fill="#8fbcf5" stroke="none" />
    <path d="M8 0h14v12H8z" fill="#e9ecf2" stroke="none" />
    <path d="M8 3h14 M13 6h7 M13 9h7" stroke="#333" />
    {angled ? <path d="M0 18h13v4H0z" fill="#8fbcf5" stroke="none" /> : <path d="M9 18h13v4H9z" fill="#8fbcf5" stroke="none" />}
    <path d={angled ? "M14 12l-5 6" : "M16 12v6"} stroke="#667" />
  </Svg>
);

const Ear = ({ flip }) => (
  <g transform={flip}>
    <circle cx="-38" cy="-37" r="7" />
    <path d="M-43-17L-51-25A18 18 0 1 1-25-50L-16-42" />
  </g>
);

function Drawing() {
  return (
    <Sheet viewBox="372 221 1177 787" role="img" aria-label="Layout sheet">
      <rect x="431" y="241" width="1059" height="748" fill="#fbfbfd" stroke="#222" />
      <path d="M502 267H1419 M502 962H1419" stroke="#222" strokeDasharray="25 22" />
      <path d="M502 267V962 M1419 267V962" stroke="#222" strokeDasharray="23 22" />

      {/* top view */}
      <path d="M642 443A40 40 0 0 1 722 443 M642 467A40 40 0 0 0 722 467 M642 443V467 M722 443V467" stroke="#a0a0a4" />
      <path d="M637 419H727 M637 442H727 M637 492H727 M641 430H723 M648 486H716 M651 424H714 M655 481H707 M641 452H723" stroke="#77777b" />
      <path d="M625 431H737V454H625z M626 455H738V479H626z" />
      <path d="M639 419V492 M642 419V492 M722 419V492 M725 419V492 M665 419V492 M698 419V492 M630 431V454 M635 431V479 M631 455V479 M734 431V479 M729 431V479 M656 455V479 M709 431V479 M650 424V486 M714 424V486" stroke="#77777b" />
      <path d="M646 447H717 M650 461H713 M664 469H699 M668 464H696 M656 438L664 430 M706 438L698 430" />
      <path d="M665 442A16 16 0 0 1 697 442" stroke="#c48f99" />
      <path d="M643 442H720 M646 438V455" stroke="#d8a5ae" />
      <circle cx="682" cy="467" r="15" stroke="#444448" />
      <path d="M681 389V497" stroke="#2ebd8c" />

      {/* front view */}
      <path d="M642 622H723V632H642z M667 632V749 M682 622V747 M697 632V749 M667 836V863H697V836 M682 838V863" />
      <g transform="translate(682 793)">
        <Ear />
        <Ear flip="scale(-1 1)" />
        <Ear flip="scale(1 -1)" />
        <Ear flip="scale(-1 -1)" />
      </g>
      <g stroke="#66666a">
        <circle cx="682" cy="793" r="45" />
        <circle cx="682" cy="793" r="39" />
        <circle cx="682" cy="793" r="33" />
        <circle cx="682" cy="793" r="28" />
      </g>

      {/* coordinate system marker */}
      <path d="M473 851V907 M515 860V907" stroke="#5fc4a0" />
      <path d="M473 851H507 M473 907H515" stroke="#e79aa8" />
      <path d="M473 837V851 M507 851V860H515L507 851 M515 907H543" stroke="#222" />
      <text x="467" y="830" fill="#5fc4a0">Y</text>
      <text x="551" y="914" fill="#e79aa8">X</text>
      <text x="482" y="901" fill="#222">W</text>
    </Sheet>
  );
}

const CloseX = ({ size = 11, stroke }) => (
  <Svg width={size} height={size} viewBox="0 0 12 12" $stroke={stroke} aria-hidden="true"><path d="M1 1l10 10 M11 1L1 11" /></Svg>
);

/* ---------- status bar ---------- */

const StatusBar = styled.footer`
  display: flex;
  align-items: center;
  height: 29px;
  padding: 0 12px 3px 5px;
  border-bottom: 1px solid #212329;
  background: #2a2c32;
`;

const LayoutTab = styled.button`
  display: flex;
  align-items: center;
  justify-content: center;
  gap: 4px;
  width: ${(p) => p.$width}px;
  height: 21px;
  border: 1px solid #3b3e44;
  background: ${(p) => (p.$active ? "#51555c" : "none")};
  color: ${(p) => (p.$active ? "#f1f2f4" : "#c2c4c9")};
`;

const Toggles = styled.div`
  display: flex;
  align-items: center;
  gap: 2px;
  margin-left: auto;
`;

const Toggle = styled.div`
  display: flex;
  width: ${(p) => p.$width}px;
  height: 22px;
  border: 1px solid ${(p) => (p.$on ? "#3f76cf" : "transparent")};
  border-radius: 3px;
  background: ${(p) => (p.$on ? "#2b3f63" : "none")};
  button {
    display: flex;
    align-items: center;
    justify-content: center;
    gap: ${(p) => (p.$wide ? 7 : 5)}px;
    white-space: nowrap;
  }
  button:first-child {
    flex: 1;
  }
  button + button {
    width: 26px;
    border-left: 1px solid ${(p) => (p.$on ? "#3f76cf" : "transparent")};
  }
`;

const Stepper = styled.button`
  display: flex;
  align-items: center;
  justify-content: center;
  width: 22px;
  height: 22px;
  border: 1px solid #44474d;
  svg {
    transform: ${(p) => (p.$back ? "rotate(180deg)" : "none")};
  }
`;

const toggles = [
  { icon: "polar", label: "POLAR", width: 92, menu: true },
  { icon: "strack", label: "STRACK", width: 80, on: true },
  { icon: "magnet", label: "ESNAP", width: 94, on: true, menu: true },
  { icon: "corners", width: 28 },
  { icon: "lwt", label: "LWT", width: 60 },
  { icon: "ducs", label: "DUCS", width: 87, on: true, menu: true },
  { icon: "dyn", label: "DYN", width: 57, on: true },
  { icon: "quad", label: "QUAD", width: 88, on: true, menu: true },
  { icon: "rt", label: "RT", width: 70, on: true, menu: true },
  { icon: "bulb", label: "HIDE ENTITIES", width: 116, wide: true },
  { icon: "ctrl", label: "HKA", width: 56, on: true },
  { icon: "lockui", label: "LOCKUI", width: 98, menu: true },
  { icon: "workspace", label: "Modeling", width: 120, menu: true },
];

const Below = styled.div`
  height: 43px;
`;

export default function App() {
  return (
    <Window>
      <GlobalStyle />
      <Frame>
        <TitleBar>
          <AppBadge><BricsLogo size={16} /></AppBadge>
          <WindowTitle>BricsCAD Pro beta (BETA License) - [Demonstration 1.dwg]</WindowTitle>
          <WindowButton aria-label="Minimize"><Svg width="12" height="12"><path d="M0 6h12" /></Svg></WindowButton>
          <WindowButton aria-label="Restore"><Svg width="12" height="12"><path d="M1 3h8v8H1z M3 3V1h8v8H9" /></Svg></WindowButton>
          <WindowButton aria-label="Close"><CloseX /></WindowButton>
        </TitleBar>

        <QuickBar>
          <Grip />
          <Icons names={["save", "preview", "printMore"]} gap={5} pad={8} />
          <VLine />
          <Icons names={["undo", "redo"]} gap={5} pad={5} />
          <VLine />
          <IconRow $pad={4}>
            <Select
              label="Layer"
              options={["Dimensions"]}
              $width="268px"
              $indent={6}
              before={(
                <>
                  <LayerFlags>
                    {["bulbOn", "sun", "frameSun", "unlock", "printer"].map((n) => <SmallIcon key={n} name={n} size={14} />)}
                  </LayerFlags>
                  <Swatch />
                </>
              )}
            />
          </IconRow>
          <Icons names={["dropper", "pick", "isolate", "unpick", "isolateOn"]} gap={5} pad={4} />
          <VLine />
          <Icons names={["cube", "cubeBlue", "shape", "cubeSolid"]} gap={5} pad={5} on="shape" />
          <VLine />
          <Icons names={["explorer"]} pad={6} />
          <Select label="Visual style" options={["2dWireframe"]} $width="135px" />
          <IconRow $pad={3}><VLine /></IconRow>
          <Icons names={["help"]} pad={4} />
        </QuickBar>

        <RibbonArea>
          <RibbonEdge><Grip /></RibbonEdge>
          <RibbonMain>
            <TabRow>
              <MenuButton aria-label="Application menu"><span><BricsLogo size={22} /></span><Chevron /></MenuButton>
              {ribbonTabs.map((t) => <Tab key={t} $active={t === "Annotate"}>{t}</Tab>)}
              <Search>
                <SmallIcon name="search" />
                <input placeholder="Search in Ribbon" aria-label="Search in Ribbon" />
              </Search>
              <IconButton aria-label="Ribbon settings"><SmallIcon name="ribbonSetup" size={18} /></IconButton>
            </TabRow>
            <Panel>
              {groups.map((g) => <RibbonGroup key={g.title} group={g} />)}
            </Panel>
          </RibbonMain>
        </RibbonArea>

        <Workspace>
          <Dock $width={371}>
            <HGrip />
            <DockRow>
              <SideRail names={["bulb", "structure", "part"]} active="part" />
              <MechanicalBrowser />
            </DockRow>
          </Dock>
          <DrawingArea>
            <DocTabs>
              <DocTab>Start<IconButton aria-label="Close Start"><CloseX /></IconButton></DocTab>
              <DocTab $active>Demonstration 1*<IconButton aria-label="Close Demonstration 1"><CloseX /></IconButton></DocTab>
              <NewTab aria-label="New drawing"><SmallIcon name="plus" size={10} /></NewTab>
            </DocTabs>
            <Canvas>
              <Drawing />
              <CommandLine>
                <History>Select position for base view [Scale/Hidden lines/Tangent edges/iNterference edges/Orientation/Projection type/Isometric geometry/sElect/eXit] &lt;eXit&gt;:</History>
                <History $front>Select position for projected view [eXit] &lt;eXit&gt;:</History>
                <Prompt>
                  <PromptGrip />
                  <span>Select position for projected view [<mark>e<b>X</b>it</mark>] &lt;<mark>eXit</mark>&gt;:</span>
                  <Expand aria-label="Expand history" />
                </Prompt>
                <Assistant>
                  <SmallIcon name="info" />
                  <Key>Ctrl</Key>
                  <AssistantLine />
                  <Choice $active aria-label="Orthographic"><ProjectionIcon /></Choice>
                  <Choice aria-label="Angled"><ProjectionIcon angled /></Choice>
                  <IconButton aria-label="Close"><CloseX size={8} stroke={2} /></IconButton>
                </Assistant>
              </CommandLine>
            </Canvas>
          </DrawingArea>
          <Dock $width={370}>
            <HGrip />
            <DockRow>
              <PropertiesPanel />
              <SideRail names={["props", "blocks", "tiles", "layers", "clip", "materials", "balloon", "brush", "cloud"]} active="props" />
            </DockRow>
          </Dock>
        </Workspace>

        <StatusBar>
          <LayoutTab $width={84}><SmallIcon name="model" />Model</LayoutTab>
          <LayoutTab $width={85} $active>VIEWBASE ...</LayoutTab>
          <LayoutTab $width={84}>Layout1</LayoutTab>
          <LayoutTab $width={22} aria-label="New layout"><SmallIcon name="plus" size={14} /></LayoutTab>
          <LayoutTab $width={24} aria-label="Layout list"><SmallIcon name="lines" /></LayoutTab>
          <Toggles>
            {toggles.map((t) => (
              <Toggle key={t.icon} $width={t.width} $on={t.on} $wide={t.wide}>
                <button aria-label={t.label || t.icon}><SmallIcon name={t.icon} />{t.label}</button>
                {t.menu && <button aria-label="Options"><Chevron /></button>}
              </Toggle>
            ))}
          </Toggles>
          <IconRow $pad={5}>
            <Stepper $back aria-label="Previous"><Chevron open={false} /></Stepper>
            <Stepper aria-label="Next"><Chevron open={false} /></Stepper>
          </IconRow>
          <Icons names={["bell", "sliders"]} gap={18} pad={1} />
        </StatusBar>
      </Frame>
      <Below />
    </Window>
  );
}
